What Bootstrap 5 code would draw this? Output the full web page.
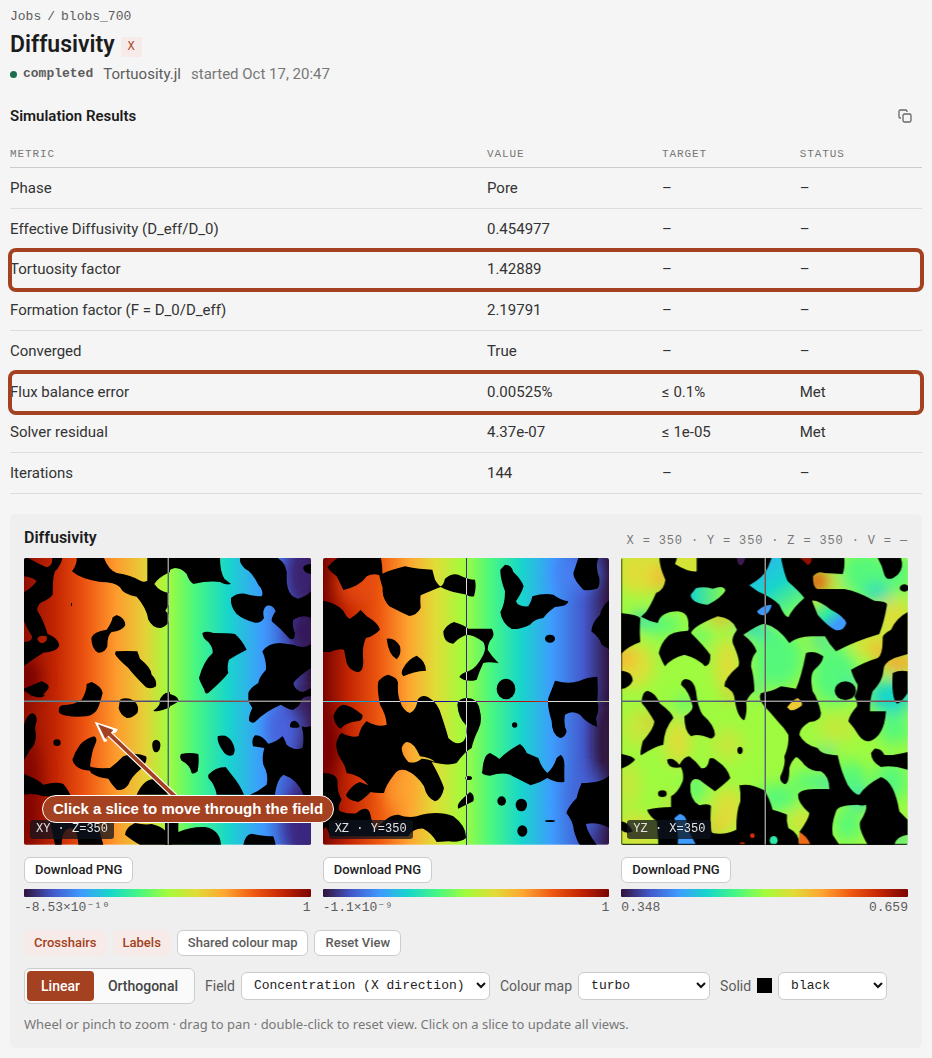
<!DOCTYPE html>
<html lang="en">
<head>
<meta charset="utf-8">
<meta name="viewport" content="width=device-width, initial-scale=1">
<title>Diffusivity – blobs_700</title>
<link rel="stylesheet" href="https://cdn.jsdelivr.net/npm/bootstrap@5.3.0/dist/css/bootstrap.min.css">
<style>
:root { --accent: #a44120; --tint: #f6ebe8; --sans: Roboto, "Noto Sans", sans-serif; --mono: "Liberation Mono", monospace; }
body { background: #f5f5f5; color: #333; font-family: var(--sans); font-size: 15px; line-height: 20px; }
.mono { font-family: var(--mono); }
.page { padding: 7px 10px 10px; }
.crumbs { font-size: 13px; gap: 6px; }
.crumbs a, .crumbs span { color: #5c5c5c; text-decoration: none; }
.title-row { gap: 6px; margin-top: 4px; }
h1 { font-size: 23px; line-height: 28px; font-weight: 600; color: #1c1c1c; }
.axis-tag { background: var(--tint); color: var(--accent); font-size: 12px; line-height: 20px; padding: 0 7px; border-radius: 2px; margin-top: 3px; }
.meta { gap: 10px; color: #5c5c5c; margin-top: 5px; }
.meta .state { font-size: 13px; font-weight: 600; gap: 6px; }
.dot { width: 7px; height: 7px; border-radius: 50%; background: #1c6e4a; }
.muted { color: #777; }
.section-head { margin-top: 22px; padding-right: 10px; }
h2 { font-size: 15px; line-height: 20px; font-weight: 600; color: #1c1c1c; }
.copy-btn { border: 0; background: none; padding: 0; color: #666; line-height: 0; }
.results { margin: 14px 0 20px; width: 100%; height: 354px; table-layout: fixed; color: #333; border-collapse: separate; border-spacing: 0; }
.results th { height: 28px; font: 400 11px/14px var(--mono); letter-spacing: .08em; color: #777; padding: 0; border-bottom: 1px solid #ccc; }
.results td { padding: 0; border-bottom: 1px solid #ddd; }
.c-metric { width: 52.3%; } .c-value { width: 19.2%; } .c-target { width: 15.1%; }
.flagged { outline: 4px solid var(--accent); outline-offset: -2px; border-radius: 6px; }
.viewer { background: #efefef; border-radius: 6px; padding: 14px; }
.viewer h2 { font-size: 16px; }
.readout { font-size: 12px; letter-spacing: .07em; color: #777; margin-top: 3px; }
.slices { display: grid; grid-template-columns: repeat(3, minmax(0, 1fr)); gap: 12px; margin-top: 7px; }
.slice { position: relative; line-height: 0; }
.slice > svg { display: block; width: 100%; height: auto; border-radius: 2px; }
.cross { stroke: #ddd; stroke-width: 1; vector-effect: non-scaling-stroke; shape-rendering: crispEdges; mix-blend-mode: difference; fill: none; }
.tag { position: absolute; left: 6px; bottom: 6px; background: rgba(13, 20, 31, .75); color: #e2e2e2; font: 12px/19px var(--mono); padding: 0 6px; border-radius: 3px; }
.callout { position: absolute; z-index: 2; left: 18px; bottom: 22px; background: var(--accent); color: #fff; border: 1px solid #fff; border-radius: 14px; font: bold 15px/26px "Liberation Sans", sans-serif; padding: 0 10px; white-space: nowrap; }
.chip { border: 1px solid #ccc; border-radius: 6px; background: #fff; color: #5c5c5c; font-size: 13px; line-height: 18px; font-weight: 500; padding: 3px 10px; }
.chip.save { color: #222; margin-top: 12px; }
.chip.on { background: var(--tint); border-color: var(--tint); color: var(--accent); padding: 3px 9px; }
.ramp { height: 8px; margin: 6px 0 3px; border-radius: 1px; background: linear-gradient(90deg, #30123b, #4458cb, #3e9bfe, #18d6cb, #46f783, #a2fc3c, #e1dc37, #fea531, #ef5a11, #c42502, #7a0402); }
.range { font-size: 13px; line-height: 16px; color: #5c5c5c; }
.toggles { gap: 6px; margin-top: 14px; }
.controls { gap: 10px; margin-top: 12px; font-size: 14px; color: #5c5c5c; }
.seg { border: 1px solid #ccc; border-radius: 6px; background: #fafafa; padding: 2px; }
.seg button { border: 0; border-radius: 4px; background: none; color: #444; font-size: 14px; line-height: 20px; font-weight: 500; padding: 5px 14px; }
.seg button.on { background: var(--accent); color: #fff; }
.pick { gap: 6px; }
.pick select { appearance: none; height: 28px; border: 1px solid #ccc; border-radius: 6px; color: #222; font: 13px/16px var(--mono); padding: 0 24px 0 12px; background: #fff url("data:image/svg+xml,%3Csvg xmlns='http://www.w3.org/2000/svg' width='10' height='7'%3E%3Cpath d='M1 1l4 4 4-4' fill='none' stroke='%23111' stroke-width='2'/%3E%3C/svg%3E") no-repeat right 3px center; }
.w-field { width: 249px; } .w-map { width: 132px; } .w-solid { width: 109px; }
.swatch { width: 15px; height: 15px; background: #000; }
.hint { font-family: "Noto Sans", sans-serif; font-size: 13px; margin: 10px 0 0; color: #777; }
</style>
</head>
<body>
<main class="page">
  <nav class="crumbs mono d-flex" aria-label="Breadcrumb"><a href="#">Jobs</a><span>/</span><a href="#">blobs_700</a></nav>
  <div class="title-row d-flex align-items-center"><h1 class="mb-0">Diffusivity</h1><span class="axis-tag mono">X</span></div>
  <div class="meta d-flex align-items-center">
    <span class="state mono d-flex align-items-center"><span class="dot"></span>completed</span><span>Tortuosity.jl</span><span class="muted">started Oct 17, 20:47</span>
  </div>

  <div class="section-head d-flex justify-content-between align-items-center">
    <h2 class="mb-0">Simulation Results</h2>
    <button class="copy-btn" type="button" aria-label="Copy results"><svg width="14" height="14" viewBox="0 0 14 14" fill="none" stroke="currentColor" stroke-width="1.3"><rect x="5" y="5" width="8" height="8" rx="1.5"/><path d="M3 9H2.3A1.3 1.3 0 0 1 1 7.700V2.300A1.300 1.300 0 0 1 2.300 1h5.400A1.300 1.300 0 0 1 9 2.300V3"/></svg></button>
  </div>

  <table class="results">
    <thead><tr><th class="c-metric">METRIC</th><th class="c-value">VALUE</th><th class="c-target">TARGET</th><th>STATUS</th></tr></thead>
    <tbody>
      <tr><td>Phase</td><td>Pore</td><td>–</td><td>–</td></tr>
      <tr><td>Effective Diffusivity (D_eff/D_0)</td><td>0.454977</td><td>–</td><td>–</td></tr>
      <tr class="flagged"><td>Tortuosity factor</td><td>1.42889</td><td>–</td><td>–</td></tr>
      <tr><td>Formation factor (F = D_0/D_eff)</td><td>2.19791</td><td>–</td><td>–</td></tr>
      <tr><td>Converged</td><td>True</td><td>–</td><td>–</td></tr>
      <tr class="flagged"><td>Flux balance error</td><td>0.00525%</td><td>≤ 0.1%</td><td>Met</td></tr>
      <tr><td>Solver residual</td><td>4.37e-07</td><td>≤ 1e-05</td><td>Met</td></tr>
      <tr><td>Iterations</td><td>144</td><td>–</td><td>–</td></tr>
    </tbody>
  </table>

  <section class="viewer">
    <div class="d-flex justify-content-between"><h2 class="mb-0">Diffusivity</h2><span class="readout mono">X = 350 · Y = 350 · Z = 350 · V = —</span></div>
    <div class="slices">
      <div>
        <div class="slice">
          <svg viewBox="12 10 860 860" role="img" aria-label="XY slice">
            <defs>
              <linearGradient id="fxy" gradientUnits="userSpaceOnUse" x1="12" x2="873" y1="0" y2="0">
                <stop offset="0" stop-color="#8f0f02"/><stop offset=".11" stop-color="#c42502"/><stop offset=".21" stop-color="#ec5210"/><stop offset=".32" stop-color="#fe9a2d"/><stop offset=".42" stop-color="#e6d038"/><stop offset=".5" stop-color="#a2fc3c"/><stop offset=".6" stop-color="#46f783"/><stop offset=".71" stop-color="#18d6cb"/><stop offset=".83" stop-color="#3e9bfe"/><stop offset=".93" stop-color="#4458cb"/><stop offset="1" stop-color="#30123b"/>
              </linearGradient>
              <filter id="soft" x="-50%" y="-50%" width="200%" height="200%"><feGaussianBlur stdDeviation="22"/></filter>
            </defs>
            <rect x="12" y="10" width="861" height="860" fill="url(#fxy)"/>
            <g filter="url(#soft)"><ellipse cx="20" cy="370" rx="40" ry="50" fill="#7a0402"/><ellipse cx="25" cy="720" rx="40" ry="160" fill="#7a0402" opacity=".7"/><ellipse cx="850" cy="60" rx="50" ry="80" fill="#3b2470"/><ellipse cx="850" cy="230" rx="45" ry="60" fill="#36195a"/><ellipse cx="850" cy="480" rx="40" ry="90" fill="#3b1c5c"/><ellipse cx="850" cy="800" rx="60" ry="110" fill="#3a2880"/><ellipse cx="790" cy="520" rx="50" ry="60" fill="#4a62dc"/></g>
            <path fill-rule="evenodd" d="M12,10H25Q60,30 80,38Q98,35 97,10H127Q122,35 105,50Q98,65 98,120Q90,132 62,144Q50,155 52,168Q70,195 83,238Q112,248 118,270Q115,290 70,294Q40,312 12,334V262Q38,262 36,245Q22,225 12,200V112Q30,105 50,80Q40,68 12,65ZM52,250Q60,240 80,245Q84,262 66,266Q52,262 52,250"/>
            <path d="M170,10Q172,28 156,50Q180,72 240,82Q285,82 300,98Q310,120 350,126Q380,160 385,195Q400,222 422,220Q440,215 447,200V180L436,168L447,150V115Q420,112 403,88Q415,68 450,52V10H382V78Q370,85 358,77Q335,62 290,55Q265,45 252,10ZM290,181Q316,190 316,212Q305,230 275,232Q262,240 262,275Q255,295 235,294Q215,285 214,250Q220,230 260,225Q275,205 278,188ZM287,290Q320,288 352,290L360,312Q395,340 395,360Q412,375 408,395Q395,405 378,398Q340,360 325,340Q290,310 285,298ZM12,402Q40,390 65,380Q88,388 86,400Q70,425 50,428Q30,420 12,408ZM215,382Q245,395 248,415Q240,445 234,460Q225,480 200,485Q140,490 118,475Q112,460 125,452Q165,450 185,435Q200,410 200,388ZM153,145h3v9h-3ZM300,435Q320,425 342,438Q360,455 352,475Q335,492 320,490Q300,480 296,460ZM450,412Q425,415 418,440Q425,450 400,468Q410,475 450,458ZM25,420H75Q70,430 50,427Z"/>
            <g transform="translate(435)"><path d="M-10,10H165Q165,50 178,72L198,88Q180,92 165,82Q130,78 85,88Q72,80 65,58Q50,40 30,40Q10,45 -2,60L-12,64ZM0,415Q40,420 42,440Q20,455 0,460ZM225,10H338Q370,30 365,70Q365,125 400,132Q425,125 438,110V190Q415,178 385,195Q380,215 390,235L388,250Q378,258 370,248Q345,220 320,200Q318,190 332,170Q325,150 305,153Q290,165 297,190Q290,205 270,204Q235,195 215,178Q195,155 198,130Q215,115 240,117Q270,125 290,125Q298,110 280,90Q260,50 240,42Q222,25 225,10ZM438,28Q412,30 415,42Q418,55 438,58ZM112,235Q125,228 145,235Q190,235 210,238Q230,255 245,285Q215,300 192,315Q185,335 190,355Q175,375 130,415Q120,420 118,405Q102,375 102,370Q115,320 143,295Q145,280 130,262Q112,250 112,235ZM292,290Q310,265 345,265L385,270Q420,285 438,268V340Q400,365 385,385Q390,410 415,412L438,400V425Q410,425 408,440Q405,455 385,465Q370,465 348,450Q300,470 270,502Q262,508 252,498Q250,485 262,460L250,440V415Q255,400 280,385Q280,370 303,345Q305,320 292,290Z"/></g>
            <g transform="translate(0 420)"><path d="M38,55Q52,62 50,80Q42,95 48,120Q48,150 30,165Q20,185 12,195V90Q20,60 38,55ZM111,134q11,0 11,10t-11,10t-11,-10t11,-10ZM222,125Q235,130 225,150Q215,170 210,215Q215,222 270,220Q290,205 310,185Q345,170 378,185Q385,200 360,225Q335,245 325,270Q310,290 290,285Q275,270 265,252Q235,250 213,235L210,228Q165,225 157,195Q165,170 180,150Q200,130 222,125ZM409,135q14,3 12,20t-12,18t-12,-18t12,-20ZM12,238Q55,255 70,270Q110,260 130,268Q148,290 152,305H70Q40,295 12,300ZM90,380H230L250,450H175Q172,400 150,400Q125,405 125,450H105ZM345,385Q375,392 395,388Q450,400 455,450H360Q340,440 315,420Q315,400 345,385ZM350,300Q370,255 400,253L450,290V300Z"/></g>
            <g transform="translate(435 420)"><path fill-rule="evenodd" d="M158,125Q185,115 200,140Q215,165 205,180Q190,188 178,175Q155,145 158,125ZM48,178Q75,172 100,178Q103,200 98,230Q85,240 80,235Q75,210 50,198Q42,188 48,178ZM130,240Q150,218 182,217L200,240Q225,270 237,300H155Q150,270 130,250ZM0,385H40V412Q80,395 120,397Q165,405 168,450H0ZM235,450Q240,420 260,417Q300,425 325,425Q330,440 332,450ZM438,95Q418,100 410,95Q420,130 412,160Q390,170 365,150Q355,125 352,125Q330,145 310,147Q290,120 270,122Q258,135 264,155L298,160Q290,190 295,210Q312,240 305,270Q280,290 255,300H330Q335,255 355,240Q400,255 415,300H438ZM375,90Q378,78 390,78Q404,85 404,97Q390,102 375,97Z"/></g>
            <path class="cross" d="M445,10V870M12,440H873"/>
            <path d="M465,725L265,535" stroke="#fff" stroke-width="18"/><path d="M224,501L294,524L286,536L276,534L258,550L262,560L252,562Z" fill="#fff"/><path d="M465,725L260,530" stroke="#a44120" stroke-width="11"/><path d="M234,509L280,526L256,553Z" fill="#a44120"/>
          </svg>
          <span class="tag">XY · Z=350</span><span class="callout">Click a slice to move through the field</span>
        </div>
        <button type="button" class="chip save">Download PNG</button>
        <div class="ramp"></div><div class="range mono d-flex justify-content-between"><span>-8.53×10⁻¹⁰</span><span>1</span></div>
      </div>
      <div>
        <div class="slice">
          <svg viewBox="9 10 860 860" role="img" aria-label="XZ slice">
            <linearGradient id="fxz" gradientUnits="userSpaceOnUse" x1="9" x2="869" y1="0" y2="0">
              <stop offset="0" stop-color="#7a0402"/><stop offset=".09" stop-color="#c42502"/><stop offset=".2" stop-color="#ef5a11"/><stop offset=".3" stop-color="#fea531"/><stop offset=".39" stop-color="#e1dc37"/><stop offset=".49" stop-color="#a2fc3c"/><stop offset=".59" stop-color="#46f783"/><stop offset=".69" stop-color="#18d6cb"/><stop offset=".8" stop-color="#3e9bfe"/><stop offset=".91" stop-color="#4458cb"/><stop offset="1" stop-color="#30123b"/>
            </linearGradient>
            <rect x="9" y="10" width="860" height="860" fill="url(#fxz)"/>
            <g filter="url(#soft)"><ellipse cx="15" cy="570" rx="40" ry="90" fill="#7a0402"/><ellipse cx="110" cy="90" rx="60" ry="60" fill="#ea5010" opacity=".7"/><ellipse cx="240" cy="700" rx="50" ry="60" fill="#fea531" opacity=".6"/><ellipse cx="770" cy="60" rx="70" ry="50" fill="#4880f6" opacity=".7"/><ellipse cx="800" cy="740" rx="60" ry="90" fill="#4567de" opacity=".6"/><ellipse cx="865" cy="560" rx="35" ry="110" fill="#30123b"/></g>
            <path fill-rule="evenodd" d="M55,10H183Q188,40 187,57Q215,45 255,35Q300,45 337,45L345,75Q355,92 362,95Q370,92 375,72Q395,55 415,60Q445,75 465,75Q470,100 462,125Q450,128 440,120L400,112Q375,105 362,97Q340,105 302,122Q300,130 302,160Q290,182 268,184Q240,172 208,155Q185,130 188,100Q180,75 178,62Q160,55 140,65Q120,95 70,106Q60,85 50,65Q30,50 22,38Q45,12 55,10ZM9,138Q50,145 70,168Q80,190 90,192Q110,180 122,166L140,185Q175,205 180,225Q160,245 138,250Q125,275 130,320Q130,350 115,353Q90,350 80,325Q75,300 72,285Q55,280 30,292H9ZM200,252Q225,248 240,275Q245,300 230,314Q205,300 200,252ZM290,303Q318,320 318,348Q280,350 250,365Q240,355 250,340Q265,312 290,303ZM402,202Q430,210 445,222H515Q525,235 517,250Q503,265 503,285Q515,305 536,326Q505,320 490,325Q480,345 470,375Q440,385 418,367Q425,355 445,350Q470,340 490,300Q500,280 490,262Q460,240 440,240Q415,250 400,267Q370,265 370,230Q380,210 402,202ZM555,30Q575,30 580,52Q605,75 611,95Q605,115 588,140Q595,158 625,155Q635,140 637,125Q670,115 700,120Q720,135 745,140Q745,155 705,157Q680,175 670,190Q645,192 630,210Q600,225 575,223Q545,205 541,172Q555,150 555,110Q540,70 541,45ZM775,10H835Q825,35 838,70Q840,98 830,102Q800,110 790,105Q760,75 760,55ZM869,135Q845,155 840,180Q815,205 814,230Q840,250 845,270L869,285ZM705,378Q750,390 780,378Q800,368 832,366Q835,400 832,440Q840,465 828,490L832,517Q800,505 780,480Q755,465 735,480Q730,510 740,530Q735,550 720,550Q695,540 695,500Q680,450 685,430Q695,405 705,378ZM205,360Q235,370 234,385Q232,420 240,440Q250,470 270,475Q290,465 293,435Q305,418 325,428Q355,445 365,485Q380,530 385,550Q410,575 430,560Q445,540 437,510Q415,490 412,450Q415,430 440,430Q475,430 480,470Q488,500 475,525Q460,555 455,580Q435,590 410,625Q385,635 335,622L350,650Q365,680 372,700Q365,735 345,740Q320,730 312,695Q290,660 258,647Q235,640 222,660Q195,695 192,715Q165,715 152,712Q130,735 115,742Q80,735 78,720Q95,690 120,682L145,692Q120,660 80,655Q75,630 60,610Q45,580 50,560Q60,535 65,535Q95,550 115,545Q125,510 140,500Q175,520 200,510Q198,480 180,450Q170,400 175,380Q190,362 205,360ZM260,562Q280,560 300,605Q330,608 345,622Q320,612 305,612Q285,628 265,622Q245,600 245,580Q250,565 260,562ZM70,450Q90,450 127,480Q130,500 110,500Q75,505 62,522Q45,515 40,485Q50,455 70,450ZM9,655Q50,655 53,680Q50,710 65,735Q50,760 60,770Q90,780 110,775Q140,750 150,775Q155,800 165,830Q200,780 235,780Q260,790 290,785Q350,765 400,785Q440,815 438,850Q420,865 385,860L350,862Q335,835 310,822Q280,820 265,845H30Q15,800 9,830ZM450,712Q465,720 460,740Q430,755 415,762Q408,750 430,730ZM510,595Q530,605 538,613Q560,590 600,568Q615,580 620,595L655,610Q665,640 682,655Q700,640 710,610L722,600Q735,610 733,640V682Q705,685 682,670Q660,685 632,692Q590,670 570,660Q545,652 510,663Q480,660 487,650Q490,600 510,595ZM869,660Q850,685 785,685Q775,705 770,730Q745,755 739,775Q760,800 762,830Q775,870 780,870H830Q800,830 798,808Q830,800 869,820Z"/>
            <ellipse cx="690" cy="252" rx="15" ry="12"/><ellipse cx="558" cy="403" rx="28" ry="31"/><circle cx="584" cy="511" r="8"/><ellipse cx="545" cy="739" rx="13" ry="14"/><ellipse cx="604" cy="751" rx="17" ry="19"/><ellipse cx="607" cy="829" rx="15" ry="17"/><ellipse cx="690" cy="799" rx="15" ry="3"/><ellipse cx="446" cy="670" rx="10" ry="6"/>
            <path class="cross" d="M439,10V870M9,440H869"/>
          </svg>
          <span class="tag">XZ · Y=350</span>
        </div>
        <button type="button" class="chip save">Download PNG</button>
        <div class="ramp"></div><div class="range mono d-flex justify-content-between"><span>-1.1×10⁻⁹</span><span>1</span></div>
      </div>
      <div>
        <div class="slice">
          <svg viewBox="10 10 860 860" role="img" aria-label="YZ slice">
            <defs>
              <linearGradient id="g1"><stop offset="0" stop-color="#18d6cb"/><stop offset="1" stop-color="#8cfb4c"/></linearGradient>
              <linearGradient id="g2" x2="1" y2="1"><stop offset="0" stop-color="#c0f038"/><stop offset=".45" stop-color="#2ee8a5"/><stop offset=".75" stop-color="#3e9bfe"/></linearGradient>
              <linearGradient id="g3" x2=".6" y2="1"><stop offset="0" stop-color="#2fb4f4"/><stop offset=".55" stop-color="#18d6cb"/><stop offset="1" stop-color="#6cfa6a"/></linearGradient>
            </defs>
            <rect x="10" y="10" width="860" height="860" fill="#9efb40"/>
            <g filter="url(#soft)">
              <g fill="#dede38"><ellipse cx="70" cy="50" rx="80" ry="70"/><ellipse cx="40" cy="330" rx="70" ry="70"/><ellipse cx="330" cy="330" rx="40" ry="80"/><ellipse cx="180" cy="560" rx="40" ry="70"/><ellipse cx="60" cy="520" rx="50" ry="60" opacity=".6"/><ellipse cx="330" cy="570" rx="50" ry="50" opacity=".6"/><ellipse cx="330" cy="770" rx="50" ry="70"/><ellipse cx="60" cy="830" rx="80" ry="50"/><ellipse cx="30" cy="690" rx="40" ry="70" opacity=".6"/><ellipse cx="660" cy="520" rx="60" ry="40" opacity=".6"/><ellipse cx="830" cy="190" rx="50" ry="60"/><ellipse cx="760" cy="270" rx="60" ry="35"/><ellipse cx="670" cy="80" rx="25" ry="40"/><ellipse cx="550" cy="800" rx="40" ry="30"/></g>
              <g fill="#fea531"><ellipse cx="132" cy="70" rx="20" ry="40"/><ellipse cx="310" cy="190" rx="40" ry="16"/><ellipse cx="20" cy="310" rx="25" ry="30"/><ellipse cx="102" cy="500" rx="14" ry="25"/><ellipse cx="785" cy="290" rx="20" ry="30"/><ellipse cx="845" cy="325" rx="50" ry="30"/><ellipse cx="285" cy="820" rx="15" ry="30"/><ellipse cx="155" cy="745" rx="15" ry="12"/><ellipse cx="340" cy="420" rx="15" ry="20"/></g>
              <g fill="#55f87a"><ellipse cx="480" cy="310" rx="75" ry="90"/><ellipse cx="650" cy="360" rx="70" ry="90"/><ellipse cx="740" cy="60" rx="80" ry="70"/><ellipse cx="850" cy="60" rx="30" ry="60"/><ellipse cx="130" cy="210" rx="60" ry="30"/><ellipse cx="250" cy="245" rx="30" ry="20"/><ellipse cx="830" cy="520" rx="50" ry="50"/><ellipse cx="480" cy="730" rx="60" ry="40"/><ellipse cx="580" cy="680" rx="60" ry="30"/><ellipse cx="235" cy="700" rx="28" ry="40"/><ellipse cx="200" cy="450" rx="22" ry="30"/><ellipse cx="700" cy="680" rx="50" ry="60"/><ellipse cx="820" cy="680" rx="50" ry="60"/><ellipse cx="690" cy="810" rx="40" ry="50"/></g>
              <g fill="#18d6cb"><ellipse cx="72" cy="195" rx="30" ry="20"/><ellipse cx="410" cy="225" rx="50" ry="22"/><ellipse cx="610" cy="255" rx="35" ry="15"/><ellipse cx="780" cy="115" rx="40" ry="25"/><ellipse cx="820" cy="425" rx="70" ry="50"/><ellipse cx="630" cy="690" rx="16" ry="24"/><ellipse cx="730" cy="735" rx="26" ry="30"/><ellipse cx="625" cy="595" rx="25" ry="14"/><ellipse cx="708" cy="385" rx="14" ry="25"/><ellipse cx="415" cy="400" rx="14" ry="20"/><ellipse cx="850" cy="855" rx="20" ry="20"/></g>
              <ellipse cx="600" cy="80" rx="36" ry="36" fill="#ee5010"/>
            </g>
            <path d="M125,10Q125,35 143,75Q140,105 115,115Q100,150 85,172Q65,190 72,187Q95,200 120,205Q130,170 180,170Q215,172 212,215Q215,225 210,228Q160,230 148,248Q130,265 123,295Q135,325 142,335Q160,310 200,300Q240,310 262,335Q280,330 278,300Q260,275 220,235Q225,215 300,185Q345,190 358,225Q340,250 345,265Q370,320 362,335Q320,370 320,395Q350,405 352,440Q360,490 380,497Q390,470 385,440Q400,415 410,410Q410,370 400,335Q400,310 417,290Q410,265 377,240Q420,210 440,207Q480,215 515,265Q540,245 580,245H622Q635,270 655,290Q710,260 785,238Q800,200 808,150Q810,140 770,138Q720,110 680,103H600Q585,100 586,65Q600,48 620,55L675,58Q682,40 680,10ZM870,172Q835,190 820,225Q790,240 795,255Q795,300 780,310Q745,320 700,345Q705,365 720,390Q720,410 710,425Q720,440 718,455Q695,480 692,500Q710,520 722,540Q735,560 755,560Q800,545 805,470H757Q755,440 765,410Q795,380 797,350Q795,325 830,310L870,298ZM825,355Q845,345 870,350V415Q850,445 838,447Q820,430 825,355ZM780,10H850Q860,40 840,60Q810,85 800,60Q795,35 780,10ZM10,175Q60,180 68,190Q65,235 68,262Q30,275 10,298ZM10,348Q45,350 45,378Q35,400 10,403ZM205,373Q230,375 235,410Q240,460 255,480Q290,510 292,540Q285,555 275,550Q240,535 220,545Q200,530 200,485Q225,470 225,455Q215,410 190,390Q190,375 205,373ZM90,408Q115,415 125,445Q165,475 167,490Q140,520 137,570Q110,575 70,602Q65,600 75,560Q110,520 110,500Q90,465 72,445Q72,410 90,408ZM770,582Q790,580 800,600Q820,605 870,592V645Q820,630 790,637Q760,620 760,595ZM10,597Q50,605 52,615Q40,630 10,642ZM10,800Q30,800 45,830Q25,840 10,825Z"/>
            <path d="M565,295Q590,285 617,305Q615,325 590,345Q575,360 585,410Q600,430 610,475Q610,500 575,502Q545,520 545,540Q560,570 600,580Q610,600 660,602Q670,650 690,690Q710,720 725,720Q745,690 790,667Q830,680 845,770L870,795V840Q835,845 830,870H750Q720,820 728,800Q750,765 745,750Q735,755 720,750Q660,750 655,770Q640,810 645,840L665,870H578Q560,850 545,832Q575,790 575,775Q540,745 541,720Q545,705 590,703H635Q635,665 610,650Q580,650 560,630Q545,610 535,607Q520,620 515,640Q515,690 500,688Q485,680 488,665Q505,630 500,605Q515,570 512,540Q500,520 480,500Q455,470 440,455Q420,430 430,415Q460,412 490,395Q525,400 535,402Q550,370 565,295Z"/>
            <path d="M122,870Q120,830 118,800Q95,785 88,765Q120,757 160,757L160,725Q180,715 195,680Q200,660 190,638Q150,645 148,615Q165,605 185,630Q200,605 215,605Q235,620 250,640Q270,645 275,612Q285,605 300,620Q330,640 338,670Q330,680 292,710Q265,690 245,675Q222,668 218,690Q215,735 245,752Q275,745 280,755Q275,830 285,835Q320,842 356,825Q355,770 368,740Q370,715 365,692Q400,685 440,707Q455,730 465,765Q500,775 508,780Q505,800 512,820Q545,835 545,870Z"/>
            <ellipse cx="683" cy="408" rx="32" ry="28"/><ellipse cx="860" cy="100" rx="14" ry="11"/><ellipse cx="367" cy="587" rx="8" ry="11"/><ellipse cx="134" cy="717" rx="13" ry="10"/>
            <path fill="url(#g3)" d="M462,10H490Q500,60 510,80Q545,110 560,130Q525,160 512,188Q500,185 485,150Q465,130 420,110L395,92Q440,65 450,40Z"/>
            <path fill="url(#g1)" d="M235,100Q260,95 285,102Q320,90 323,108Q310,130 270,150Q220,145 219,120Z"/>
            <path fill="url(#g2)" d="M583,138Q600,135 640,165Q680,185 686,205Q680,228 655,227Q630,215 600,180Z"/>
            <path fill="#d4e436" d="M178,10H237V50Q210,52 172,28Z"/><path fill="#3b1a50" d="M358,10H383Q378,30 368,32Q358,28 358,10Z"/><path fill="#8f0f02" d="M548,10H582Q582,28 570,31Z"/>
            <path fill="#3e9bfe" d="M418,170Q435,150 462,150Q458,172 440,182Q422,182 418,170ZM185,778Q210,780 208,820L235,870H180Q185,840 170,790Z"/>
            <path fill="#eccb34" d="M508,458Q520,440 540,430Q555,440 553,452Q535,468 518,467Z"/><path fill="#ee6a18" d="M545,832Q570,845 578,870H543Z"/><circle cx="404" cy="843" r="7" fill="#d83005"/><ellipse cx="374" cy="867" rx="8" ry="4" fill="#d83005"/><ellipse cx="468" cy="857" rx="12" ry="13" fill="#2ee8a5"/>
            <path d="M11,10V869H870" fill="none" stroke="#000" stroke-width="3"/>
            <path class="cross" d="M443,10V870M10,440H870"/>
          </svg>
          <span class="tag">YZ · X=350</span>
        </div>
        <button type="button" class="chip save">Download PNG</button>
        <div class="ramp"></div><div class="range mono d-flex justify-content-between"><span>0.348</span><span>0.659</span></div>
      </div>
    </div>

    <div class="toggles d-flex flex-wrap">
      <button type="button" class="chip on" aria-pressed="true">Crosshairs</button><button type="button" class="chip on" aria-pressed="true">Labels</button><button type="button" class="chip">Shared colour map</button><button type="button" class="chip">Reset View</button>
    </div>
    <div class="controls d-flex flex-wrap align-items-center">
      <div class="seg d-flex"><button type="button" class="on">Linear</button><button type="button">Orthogonal</button></div>
      <div class="pick d-flex align-items-center"><label for="field">Field</label><select id="field" class="w-field"><option>Concentration (X direction)</option></select></div>
      <div class="pick d-flex align-items-center"><label for="cmap">Colour map</label><select id="cmap" class="w-map"><option>turbo</option></select></div>
      <div class="pick d-flex align-items-center"><label for="solid">Solid</label><span class="swatch"></span><select id="solid" class="w-solid"><option>black</option></select></div>
    </div>
    <p class="hint">Wheel or pinch to zoom · drag to pan · double-click to reset view. Click on a slice to update all views.</p>
  </section>
</main>
<script src="https://cdn.jsdelivr.net/npm/bootstrap@5.3.0/dist/js/bootstrap.bundle.min.js"></script>
</body>
</html>
